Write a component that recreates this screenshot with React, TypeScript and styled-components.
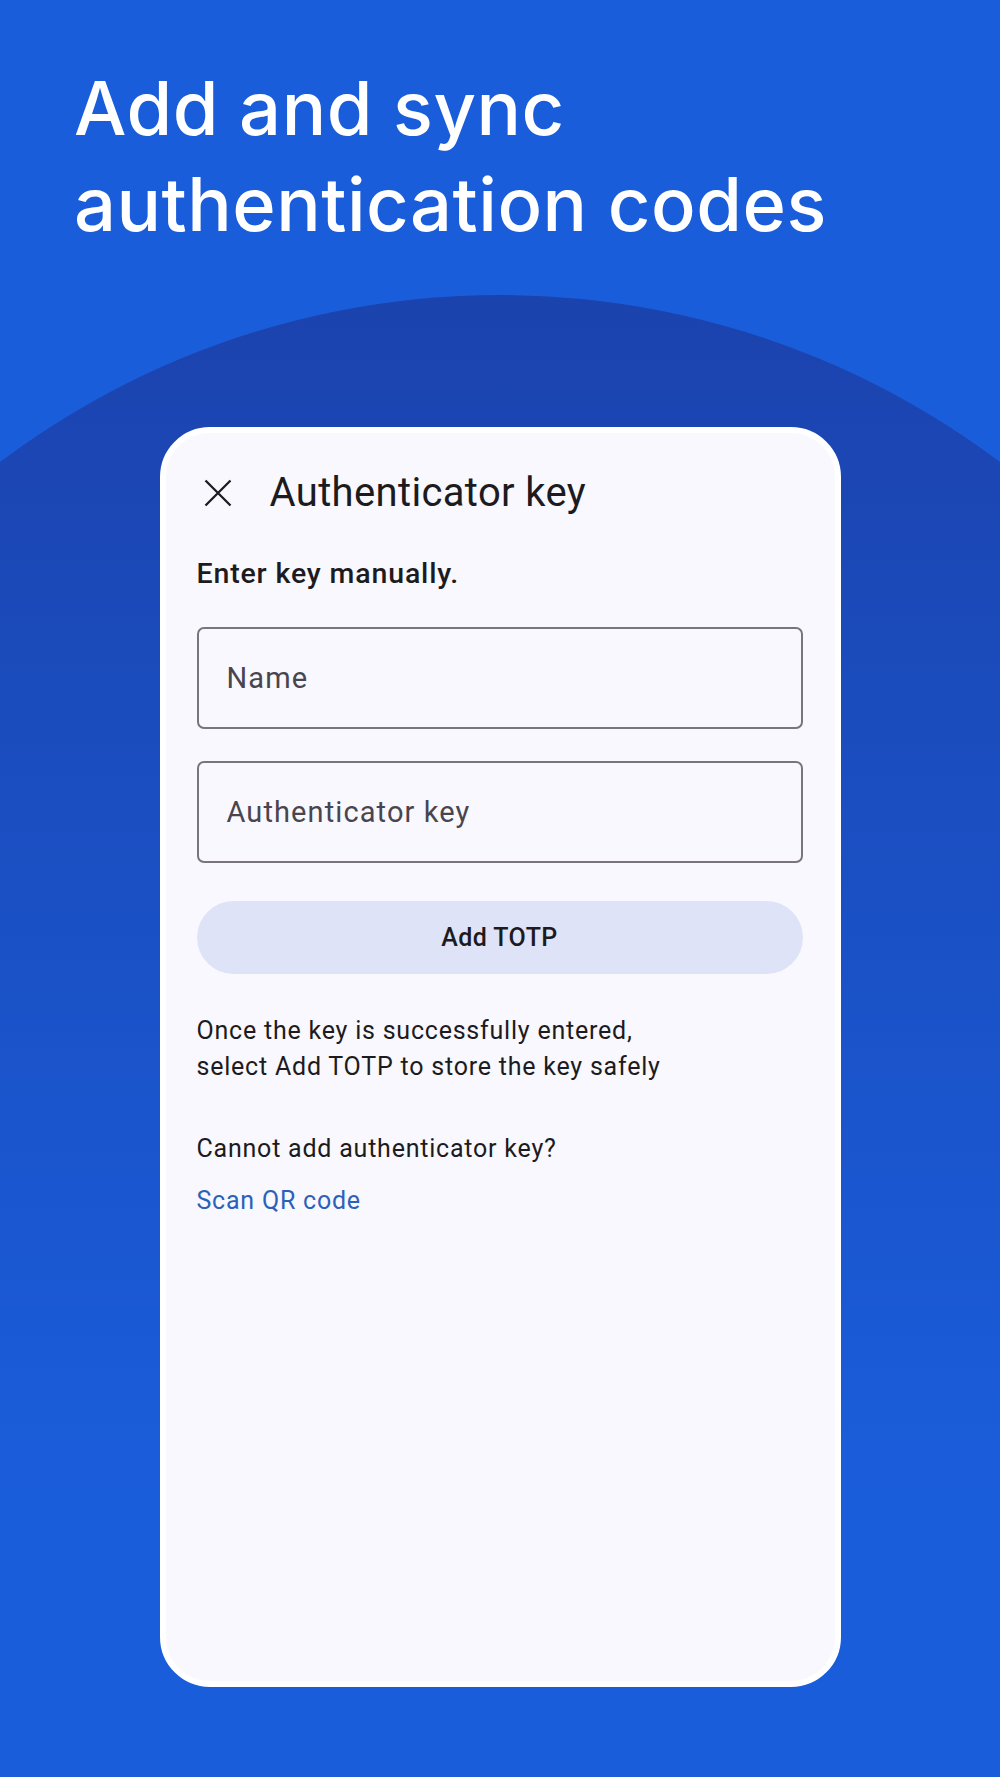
import React from 'react'
import styled, {createGlobalStyle} from 'styled-components'

const GlobalStyle = createGlobalStyle`
  html, body {
    margin: 0;
    padding: 0;
  }
  body {
    background: #1a5ddb;
  }
`

const Page = styled.div`
  position: relative;
  width: 1000px;
  height: 1777px;
  overflow: hidden;
  background: #1a5ddb;
  display: flex;
  flex-direction: column;

  /* big soft dome behind the card */
  &::before {
    content: '';
    position: absolute;
    left: -332px;
    top: 295px;
    width: 1664px;
    height: 1664px;
    border-radius: 50%;
    background: linear-gradient(to bottom, #1b43ae 0%, #1b47b5 12%, #1a5ddb 72%);
  }
`

const Headline = styled.h1`
  position: relative;
  margin: 0;
  padding: 60px 0 0 74px;
  font-family: Inter, 'Liberation Sans', sans-serif;
  font-weight: 500;
  font-size: 74px;
  line-height: 96px;
  letter-spacing: 0.5px;
  color: #fff;
`

const Card = styled.div`
  position: relative;
  align-self: center;
  box-sizing: border-box;
  width: 681px;
  height: 1260px;
  margin-top: 175px;
  padding: 39px 32px 0 31px;
  border: 6px solid #fff;
  border-radius: 50px;
  background: #f8f8fe;
  display: flex;
  flex-direction: column;
  font-family: Roboto, 'Liberation Sans', sans-serif;
  color: #1d1b20;
`

const Header = styled.div`
  display: flex;
  align-items: center;
  height: 42px;
  gap: 31px;
`

const IconButton = styled.button`
  width: 42px;
  height: 42px;
  padding: 0;
  border: 0;
  background: none;
  color: #1d1b20;
  display: flex;
  align-items: center;
  justify-content: center;
`

const Title = styled.h2`
  margin: 0;
  font-size: 40px;
  font-weight: 400;
  line-height: 42px;
  letter-spacing: 0.35px;
  color: #1d1b20;
`

const Lead = styled.p`
  margin: 43px 0 0;
  font-size: 28.5px;
  font-weight: 500;
  line-height: 34px;
  letter-spacing: 0.85px;
`

const Field = styled.div<{$first?: boolean}>`
  box-sizing: border-box;
  height: 102px;
  margin-top: ${(p) => (p.$first ? '36px' : '32px')};
  padding-left: 28px;
  border: 2px solid #79747e;
  border-radius: 7px;
  display: flex;
  align-items: center;
  font-size: 29px;
  letter-spacing: 1.1px;
  color: #49454f;
`

const PrimaryButton = styled.button`
  height: 73px;
  margin-top: 38px;
  border: 0;
  border-radius: 37px;
  background: #dee3f8;
  font-family: Roboto, 'Liberation Sans', sans-serif;
  font-size: 25px;
  font-weight: 500;
  letter-spacing: 0.4px;
  color: #1d1b20;
`

const Body = styled.p<{$gap: number}>`
  margin: ${(p) => p.$gap}px 0 0;
  font-size: 25px;
  line-height: 36px;
  letter-spacing: 0.78px;
  color: #1d1b20;
`

const Link = styled.a`
  margin-top: 16px;
  font-size: 25px;
  line-height: 36px;
  letter-spacing: 0.78px;
  color: #2b62b8;
  text-decoration: none;
`

function CloseIcon() {
  return (
    <svg width="42" height="42" viewBox="0 0 42 42" fill="none">
      <path d="M8.5 8.5L33.5 33.5M33.5 8.5L8.5 33.5" stroke="currentColor" strokeWidth="2.3" />
    </svg>
  )
}

export default function App() {
  return (
    <>
      <GlobalStyle />
      <Page>
        <Headline>
          Add and sync
          <br />
          authentication codes
        </Headline>

        <Card>
          <Header>
            <IconButton aria-label="Close">
              <CloseIcon />
            </IconButton>
            <Title>Authenticator key</Title>
          </Header>

          <Lead>Enter key manually.</Lead>

          <Field $first>Name</Field>
          <Field>Authenticator key</Field>

          <PrimaryButton>Add TOTP</PrimaryButton>

          <Body $gap={39}>
            Once the key is successfully entered,
            <br />
            select Add TOTP to store the key safely
          </Body>

          <Body $gap={46}>Cannot add authenticator key?</Body>
          <Link href="#">Scan QR code</Link>
        </Card>
      </Page>
    </>
  )
}
